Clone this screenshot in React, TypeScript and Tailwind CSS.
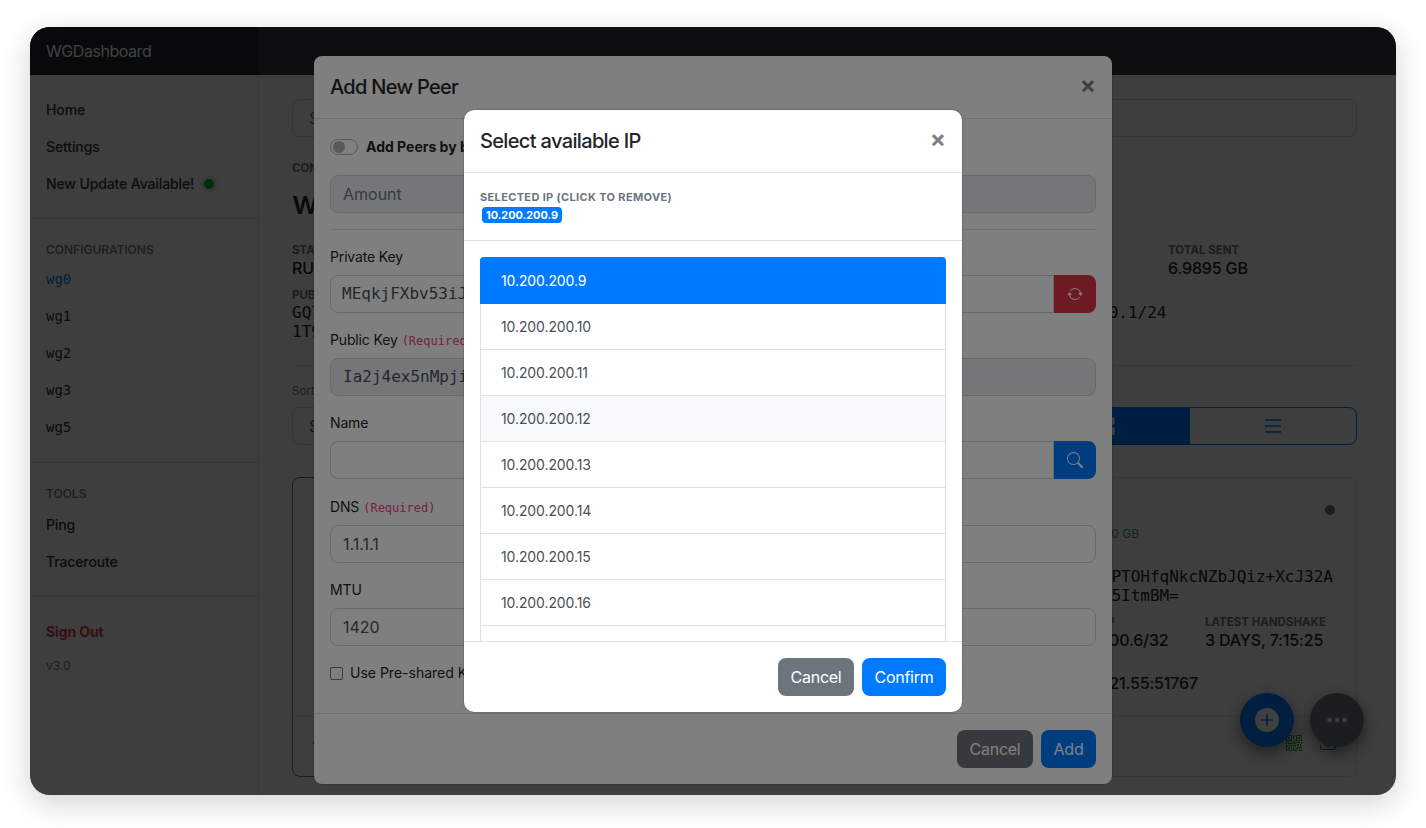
import React from 'react';
import {
  BsArrowRepeat,
  BsSearch,
  BsGridFill,
  BsList,
  BsPlusCircleFill,
  BsThreeDots,
  BsQrCode,
  BsDownload,
  BsGear,
} from 'react-icons/bs';

const sans = "font-['Inter','Liberation_Sans',sans-serif]";
const mono = "font-['DejaVu_Sans_Mono','Liberation_Mono',monospace]";

const NavItem: React.FC<{ children: React.ReactNode; className?: string }> = ({ children, className }) => (
  <a className={`flex items-center h-[37px] px-4 text-[14px] tracking-[-0.12px] font-medium text-[#333] ${className ?? ''}`}>{children}</a>
);

const SideHeading: React.FC<{ children: React.ReactNode; className?: string }> = ({ children, className }) => (
  <h6 className={`px-4 text-[12px] leading-[20px] font-medium text-[#6c757d] ${className ?? ''}`}>{children}</h6>
);

const Sidebar: React.FC = () => (
  <aside className="w-[229px] shrink-0 border-r border-[#e3e5e8] bg-[#f8f9fa]">
    <div className="pt-4 pb-4 border-b border-[#dee2e6]">
      <NavItem>Home</NavItem>
      <NavItem>Settings</NavItem>
      <NavItem>
        New Update Available!
        <span className="ml-[10px] w-2.5 h-2.5 rounded-full bg-[#28a745] ring-[3px] ring-[#28a745]/25" />
      </NavItem>
    </div>
    <div className="pt-[21px] pb-4 border-b border-[#dee2e6]">
      <SideHeading className="mb-[1px]">CONFIGURATIONS</SideHeading>
      {['wg0', 'wg1', 'wg2', 'wg3', 'wg5'].map((c, i) => (
        <NavItem key={c} className={`${mono} !font-normal !tracking-normal ${i === 0 ? '!text-[#007bff]' : ''}`}>
          {c}
        </NavItem>
      ))}
    </div>
    <div className="pt-[21px] pb-4 border-b border-[#dee2e6]">
      <SideHeading className="mb-[2px]">TOOLS</SideHeading>
      <NavItem>Ping</NavItem>
      <NavItem>Traceroute</NavItem>
    </div>
    <div className="pt-4">
      <NavItem className="!font-bold !text-[#dc3545]">Sign Out</NavItem>
      <p className="px-4 pt-[7px] text-[12px] leading-[18px] text-[#6c757d]">v3.0</p>
    </div>
  </aside>
);

const Stat: React.FC<{ label: string; children: React.ReactNode }> = ({ label, children }) => (
  <div>
    <small className="block text-[11.5px] leading-[14px] font-bold text-[#6c757d]">{label}</small>
    <div className="text-[16px] tracking-[-0.15px] leading-[22px] font-medium text-[#212529]">{children}</div>
  </div>
);

const PeerCard: React.FC<{ active?: boolean }> = ({ active }) => (
  <div className={`flex flex-col h-[300px] rounded-[8px] border ${active ? 'border-[#28a745]' : 'border-[#dee2e6]'}`}>
    <div className="flex-1 px-[21px] pt-[21px]">
      <div className="flex justify-end h-[22px] items-center">
        <span className={`w-2.5 h-2.5 rounded-full ${active ? 'bg-[#28a745]' : 'bg-[#6c757d]'}`} />
      </div>
      <p className="mt-[5px] text-[12px] leading-[16px] text-[#28a745] text-right pr-[196px]">0 GB</p>
      <small className="block mt-[11px] text-[11.5px] leading-[14px] font-bold text-[#6c757d]">PUBLIC KEY</small>
      <p className={`${mono} text-[16px] leading-[19px] break-all text-[#212529]`}>
        Rt8GsqLPTOHfqNkcNZbJQiz+XcJ32AwYe8bA15ItmBM=
      </p>
      <div className="grid grid-cols-[161px_1fr] mt-[10px]">
        <Stat label="ALLOWED IP">10.200.200.6/32</Stat>
        <Stat label="LATEST HANDSHAKE">3 DAYS, 7:15:25</Stat>
      </div>
      <div className="mt-[7px]">
        <Stat label="ENDPOINT">192.168.121.55:51767</Stat>
      </div>
    </div>
    <div className="h-[60px] border-t border-[#dee2e6] flex items-center justify-between px-[20px] pb-[7px]">
      <BsGear className="text-[#007bff] text-[16px]" />
      <div className="flex items-center gap-[18px] text-[16px]">
        <BsQrCode className="text-[#28a745]" />
        <BsDownload className="text-[#007bff]" />
      </div>
    </div>
  </div>
);

const Main: React.FC = () => (
  <main className="flex-1 min-w-0 h-[720px] overflow-hidden pl-[33px] pr-[39px] pt-[24px] bg-[#f8f9fa] text-[#212529]">
    <div className="h-[38px] rounded-[8px] border border-[#ced4da] px-4 flex items-center text-[16px] text-[#6c757d]">
      Search Peers...
    </div>
    <small className="block mt-[24px] text-[11.5px] leading-[14px] font-bold text-[#6c757d]">CONFIGURATION</small>
    <h1 className="mt-[9px] text-[32px] leading-[38px] font-medium">wg0</h1>
    <div className="grid grid-cols-5 gap-x-[30px] mt-[21px]">
      <Stat label="STATUS">RUNNING</Stat>
      <Stat label="CONNECTED PEERS">1</Stat>
      <Stat label="TOTAL USAGE">6.9895 GB</Stat>
      <Stat label="TOTAL RECEIVED">0.0000 GB</Stat>
      <Stat label="TOTAL SENT">6.9895 GB</Stat>
    </div>
    <div className="grid grid-cols-3 gap-x-[30px] mt-[8px]">
      <div>
        <small className="block text-[11.5px] leading-[16px] font-bold text-[#6c757d]">PUBLIC KEY</small>
        <p className={`${mono} text-[16px] leading-[19px] break-all`}>GQ7cPLp0Xw2mVnKsYfTzB4hRuEoAd9iJqN1T9aHkC8g=</p>
      </div>
      <div className="col-start-3">
        <small className="block text-[11.5px] leading-[16px] font-bold text-[#6c757d]">ADDRESS</small>
        <p className={`${mono} text-[16px] leading-[19px]`}>10.200.200.1/24</p>
      </div>
    </div>
    <hr className="mt-[24px] border-[#dee2e6]" />
    <div className="grid grid-cols-3 gap-x-[30px] mt-[13px]">
      <div>
        <small className="block mb-[4px] text-[11.5px] leading-[24px] text-[#6c757d]">Sort by</small>
        <div className="h-[38px] rounded-[8px] border border-[#ced4da] px-4 flex items-center text-[16px] text-[#495057]">Status</div>
      </div>
      <div>
        <small className="block mb-[4px] text-[11.5px] leading-[24px] text-[#6c757d]">Refresh interval</small>
        <div className="h-[38px] rounded-[8px] border border-[#ced4da] px-4 flex items-center text-[16px] text-[#495057]">10s</div>
      </div>
      <div>
        <small className="block mb-[4px] text-[11.5px] leading-[24px] text-[#6c757d]">Display</small>
        <div className="h-[38px] rounded-[8px] border border-[#007bff] flex overflow-hidden">
          <div className="flex-1 bg-[#007bff] flex items-center justify-center text-white text-[20px]">
            <BsGridFill />
          </div>
          <div className="flex-1 flex items-center justify-center text-[#007bff] text-[24px]">
            <BsList />
          </div>
        </div>
      </div>
    </div>
    <div className="grid grid-cols-3 gap-[30px] mt-[32px]">
      <PeerCard active />
      <PeerCard />
      <PeerCard />
      <PeerCard />
    </div>
  </main>
);

const Fabs: React.FC = () => (
  <div className="absolute right-[32px] bottom-[48px] flex gap-4">
    <button className="w-[54px] h-[54px] rounded-full bg-[#007bff] flex items-center justify-center text-white text-[24px] shadow-[0_6px_16px_rgba(0,0,0,0.5)]">
      <BsPlusCircleFill />
    </button>
    <button className="w-[54px] h-[54px] rounded-full bg-[#6c757d] flex items-center justify-center text-white text-[24px] shadow-[0_6px_16px_rgba(0,0,0,0.5)]">
      <BsThreeDots />
    </button>
  </div>
);

const Field: React.FC<{ label: React.ReactNode; children: React.ReactNode }> = ({ label, children }) => (
  <div>
    <label className="flex items-baseline h-[18px] text-[14px] tracking-[-0.15px] leading-[18px] text-[#212529] mb-[9px]">{label}</label>
    {children}
  </div>
);

const inputCls = 'h-[38px] w-full rounded-[8px] border border-[#ced4da] flex items-center px-[12px] text-[16px] text-[#495057] bg-white whitespace-nowrap overflow-hidden';
const required = <span className={`${mono} ml-[4px] text-[12px] tracking-normal leading-[18px] text-[#e83e8c]`}>(Required)</span>;
const closeCls = 'text-[24px] font-bold leading-none text-black/50 -mt-1';
const btnCls = 'h-[38px] rounded-[8px] text-white text-[16px] tracking-[-0.25px]';

const AddPeerModal: React.FC = () => (
  <div className="w-[798px] h-[728px] rounded-[8px] bg-white flex flex-col shadow-[0_0_2px_rgba(0,0,0,0.3)]">
    <div className="h-[63px] border-b border-[#dee2e6] flex items-center justify-between px-4 shrink-0">
      <h5 className="text-[20px] tracking-[-0.7px] font-medium text-[#212529]">Add New Peer</h5>
      <span className={closeCls}>×</span>
    </div>
    <div className="flex-1 px-4 pt-[20px]">
      <div className="flex items-center h-[16px] gap-2">
        <span className="w-[28px] h-[16px] rounded-full border border-[#adb5bd] flex items-center px-[2px]">
          <span className="w-[12px] h-[12px] rounded-full bg-[#adb5bd]" />
        </span>
        <span className="text-[14px] font-bold text-[#212529] -mt-[2px]">Add Peers by bulk</span>
      </div>
      <div className={`${inputCls} mt-[20px] !bg-[#e9ecef] !text-[#6c757d]`}>Amount</div>
      <hr className="mt-4 mb-[18px] border-[#dee2e6]" />
      <Field label="Private Key">
        <div className="flex">
          <div className={`${inputCls} ${mono} !px-[11px] !rounded-r-none`}>MEqkjFXbv53iJtU0oQ7mZxRa2LdYc9PnWg4KhVs8TfE=</div>
          <button className="w-[42px] shrink-0 rounded-r-[8px] bg-[#dc3545] flex items-center justify-center text-white text-[16px]">
            <BsArrowRepeat />
          </button>
        </div>
      </Field>
      <div className="mt-[18px]">
        <Field label={<>Public Key{required}</>}>
          <div className={`${inputCls} ${mono} !bg-[#e9ecef]`}>Ia2j4ex5nMpjiRc0uHqYtW7sLbZvK1dO9fGn3XyEoA8=</div>
        </Field>
      </div>
      <div className="mt-[18px]">
        <Field label="Name">
          <div className="flex">
            <div className={`${inputCls} !rounded-r-none`} />
            <button className="w-[42px] shrink-0 rounded-r-[8px] bg-[#007bff] flex items-center justify-center text-white text-[16px]">
              <BsSearch />
            </button>
          </div>
        </Field>
      </div>
      <div className="mt-[19px]">
        <Field label={<>DNS{required}</>}>
          <div className={inputCls}>1.1.1.1</div>
        </Field>
      </div>
      <div className="mt-[18px]">
        <Field label="MTU">
          <div className={inputCls}>1420</div>
        </Field>
      </div>
      <label className="flex items-center gap-[7px] mt-[18px] text-[14px] leading-[18px] text-[#212529]">
        <span className="w-[13px] h-[13px] rounded-[2px] border border-[#767676] bg-white" />
        Use Pre-shared Key
      </label>
    </div>
    <div className="h-[71px] border-t border-[#dee2e6] flex items-center justify-end gap-2 px-4 shrink-0">
      <button className={`${btnCls} w-[76px] bg-[#6c757d]`}>Cancel</button>
      <button className={`${btnCls} w-[55px] bg-[#007bff]`}>Add</button>
    </div>
  </div>
);

const ips = [9, 10, 11, 12, 13, 14, 15, 16, 17, 18];

const SelectIpModal: React.FC = () => (
  <div className="w-[498px] h-[602px] rounded-[10px] bg-white flex flex-col shadow-[0_0_2px_rgba(0,0,0,0.4)]">
    <div className="h-[63px] border-b border-[#dee2e6] flex items-center justify-between px-4 shrink-0">
      <h5 className="text-[20px] tracking-[-0.65px] font-medium text-[#212529]">Select available IP</h5>
      <span className={closeCls}>×</span>
    </div>
    <div className="h-[68px] border-b border-[#dee2e6] px-4 pt-[15px] shrink-0">
      <small className="block text-[11px] leading-[18px] font-bold text-[#6c757d] tracking-[0.35px]">SELECTED IP (CLICK TO REMOVE)</small>
      <span className="inline-flex items-center h-[16px] mt-[1px] ml-[2px] px-[4px] rounded-[4px] bg-[#007bff] text-white text-[10.9px] font-bold align-top">10.200.200.9</span>
    </div>
    <div className="h-[400px] overflow-hidden px-4 pt-[16px] shrink-0">
      <div>
        {ips.map((n, i) => (
          <div
            key={n}
            className={`flex items-center px-[20px] text-[14px] tracking-[-0.1px] border-x border-b ${
              i === 0
                ? 'h-[47px] pt-[1px] bg-[#007bff] text-white border-[#007bff] rounded-t-[4px]'
                : `h-[46px] border-[#dee2e6] text-[#495057] ${n === 12 ? 'bg-[#f8f9fa]' : 'bg-white'}`
            }`}
          >
            10.200.200.{n}
          </div>
        ))}
      </div>
    </div>
    <div className="flex-1 border-t border-[#dee2e6] flex items-center justify-end gap-2 px-4">
      <button className={`${btnCls} w-[76px] bg-[#6c757d]`}>Cancel</button>
      <button className={`${btnCls} w-[84px] bg-[#007bff]`}>Confirm</button>
    </div>
  </div>
);

const App: React.FC = () => {
  return (
    <div className={`${sans} h-screen overflow-hidden bg-white pl-[30px] pr-[30px] pt-[27px]`}>
      <div className="relative h-[768px] rounded-[20px] overflow-hidden shadow-[0_8px_30px_rgba(0,0,0,0.18)]">
        <nav className="h-[48px] flex bg-[#343a40]">
          <div className="w-[229px] h-full bg-[#212529] flex items-center px-4 text-[16px] tracking-[-0.45px] text-white">WGDashboard</div>
        </nav>
        <div className="flex">
          <Sidebar />
          <Main />
        </div>
        <Fabs />
        <div className="absolute inset-0 bg-black/50 flex justify-center pt-[29px]">
          <AddPeerModal />
        </div>
        <div className="absolute inset-0 bg-black/50 flex justify-center pt-[83px]">
          <SelectIpModal />
        </div>
      </div>
    </div>
  );
};

export default App;
